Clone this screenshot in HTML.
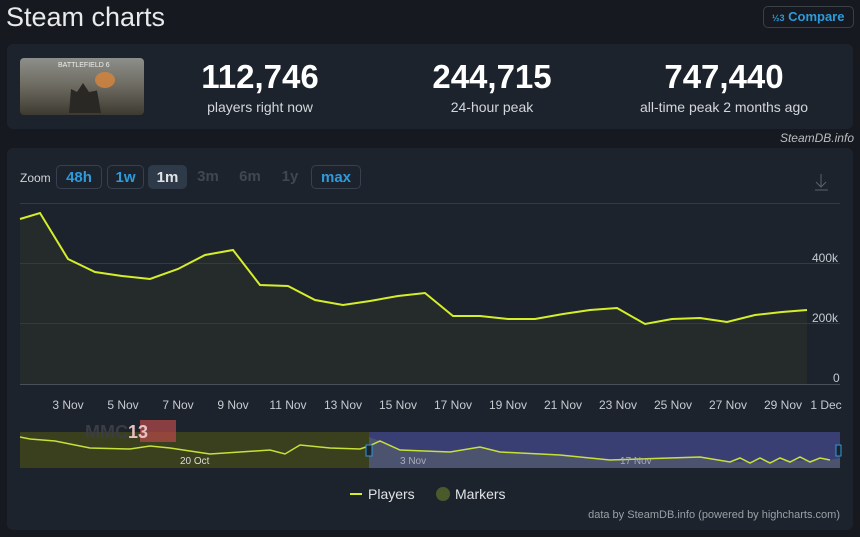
<!DOCTYPE html><html><head><style>
body{margin:0;width:860px;height:537px;background:#16191f;font-family:"Liberation Sans",sans-serif;position:relative;overflow:hidden;color:#e6e8eb}
.a{position:absolute}
.p{background:#1d232c;border-radius:6px}
.n{font-size:33px;font-weight:bold;color:#fff;text-align:center;width:240px}
.l{font-size:14px;color:#d3d7dc;text-align:center;width:240px}
.b{position:absolute;top:165px;height:24px;border:1px solid #35414f;border-radius:5px;font-size:15px;font-weight:bold;color:#2d9bdb;line-height:24px;text-align:center;box-sizing:border-box}
.x{font-size:12px;color:#c6cbd1;position:absolute;top:398px;width:50px;text-align:center}
</style></head><body>
<div class="a" style="left:6px;top:2px;font-size:27px;color:#e8eaec">Steam charts</div>
<div class="a" style="left:763px;top:6px;width:91px;height:22px;border:1px solid #3a4048;border-radius:5px;box-sizing:border-box;color:#2d9bdb;font-size:13px;font-weight:bold;line-height:20px;padding-left:8px"><span style="font-size:9px">½3</span> Compare</div>
<div class="a p" style="left:7px;top:44px;width:846px;height:85px"></div>
<div class="a" style="left:20px;top:58px;width:124px;height:57px;border-radius:4px;background:linear-gradient(180deg,#8d8f8a 0%,#6c6a60 50%,#3d3a32 100%)"><div style="position:absolute;left:38px;top:4px;font-size:7px;color:#eee">BATTLEFIELD 6</div><div style="position:absolute;left:75px;top:14px;width:20px;height:16px;border-radius:50%;background:#d9843a;opacity:.8"></div><div style="position:absolute;left:45px;top:25px;width:40px;height:30px;background:#2a2824;clip-path:polygon(10% 100%,15% 20%,30% 30%,45% 0,60% 30%,80% 25%,90% 100%)"></div></div>
<div class="a n" style="left:140px;top:58px">112,746</div><div class="a l" style="left:140px;top:99px">players right now</div>
<div class="a n" style="left:372px;top:58px">244,715</div><div class="a l" style="left:372px;top:99px">24-hour peak</div>
<div class="a n" style="left:604px;top:58px">747,440</div><div class="a l" style="left:604px;top:99px">all-time peak 2 months ago</div>
<div class="a" style="right:6px;top:131px;font-size:12px;font-style:italic;color:#b9bec4">SteamDB.info</div>
<div class="a p" style="left:7px;top:148px;width:846px;height:382px"></div>
<div class="a" style="left:20px;top:171px;font-size:12px;color:#d0d4d8">Zoom</div>
<div class="b" style="left:56px;width:46px">48h</div>
<div class="b" style="left:107px;width:37px">1w</div>
<div class="b" style="left:148px;width:39px;background:#2f3a48;border-color:#2f3a48;color:#dfe3e7">1m</div>
<div class="b" style="left:190px;width:36px;border:none;color:#3e4752">3m</div>
<div class="b" style="left:231px;width:38px;border:none;color:#3e4752">6m</div>
<div class="b" style="left:274px;width:32px;border:none;color:#3e4752">1y</div>
<div class="b" style="left:311px;width:50px">max</div>
<svg class="a" style="left:0;top:0" width="860" height="537">
<polygon fill="#252b2b" points="20,219 40,213 68,259 95,272 122,276 150,279 178,269 205,255 233,250 260,285 288,286 315,300 343,305 370,301 398,296 425,293 453,316 480,316 508,319 535,319 563,314 590,310 617,308 645,324 672,319 700,318 727,322 755,315 782,312 807,310 807,384 20,384"/>
<g stroke="#323a45" stroke-width="1"><line x1="20" y1="203.5" x2="840" y2="203.5"/><line x1="20" y1="263.5" x2="840" y2="263.5"/><line x1="20" y1="323.5" x2="840" y2="323.5"/><line x1="20" y1="384.5" x2="840" y2="384.5" stroke="#48505a"/></g>
<g stroke="#5a626c" stroke-width="1" fill="none"><path d="M821 174v12M816 182l5 5 5-5M815 190h13"/></g>
<polyline fill="none" stroke="#d5ee2a" stroke-width="2" points="20,219 40,213 68,259 95,272 122,276 150,279 178,269 205,255 233,250 260,285 288,286 315,300 343,305 370,301 398,296 425,293 453,316 480,316 508,319 535,319 563,314 590,310 617,308 645,324 672,319 700,318 727,322 755,315 782,312 807,310"/>
<rect x="20" y="432" width="349" height="36" fill="#3a3f1d"/>
<rect x="369" y="432" width="471" height="36" fill="#3a3f73"/>
<polygon fill="#58606a" opacity=".6" points="369,437 380,441 400,450 450,452 480,447 500,452 560,455 610,460 700,457 730,462 830,460 840,458 840,468 369,468"/>
<polyline fill="none" stroke="#c8e03a" stroke-width="1.5" points="20,437 30,439 55,441 90,448 130,449 150,446 170,448 210,454 240,452 270,450 285,454 300,445 330,448 360,449 369,446 380,441 400,450 450,452 480,447 500,452 560,455 610,460 700,457 730,462 740,458 750,463 760,458 770,463 780,458 790,462 800,457 810,462 820,458 830,460"/>
<rect x="366" y="445" width="6" height="11" fill="#1d232c" stroke="#2d9bdb"/>
<rect x="836" y="445" width="5" height="11" fill="#1d232c" stroke="#2d9bdb"/>
<line x1="350" y1="494" x2="362" y2="494" stroke="#d5ee2a" stroke-width="2"/>
<circle cx="443" cy="494" r="7" fill="#4b5a2a"/>
<rect x="140" y="420" width="36" height="22" fill="#b84a4a" opacity=".7"/>
</svg>
<div class="a" style="left:812px;top:251px;font-size:12px;color:#c6cbd1">400k</div>
<div class="a" style="left:812px;top:311px;font-size:12px;color:#c6cbd1">200k</div>
<div class="a" style="left:833px;top:371px;font-size:12px;color:#c6cbd1">0</div>
<div class="x" style="left:43px">3 Nov</div><div class="x" style="left:98px">5 Nov</div><div class="x" style="left:153px">7 Nov</div><div class="x" style="left:208px">9 Nov</div><div class="x" style="left:263px">11 Nov</div><div class="x" style="left:318px">13 Nov</div><div class="x" style="left:373px">15 Nov</div><div class="x" style="left:428px">17 Nov</div><div class="x" style="left:483px">19 Nov</div><div class="x" style="left:538px">21 Nov</div><div class="x" style="left:593px">23 Nov</div><div class="x" style="left:648px">25 Nov</div><div class="x" style="left:703px">27 Nov</div><div class="x" style="left:758px">29 Nov</div><div class="x" style="left:801px">1 Dec</div>
<div class="a" style="left:85px;top:422px;font-size:18px;font-weight:bold;color:#3a3e44">MMC<span style="color:#e8c0c0">13</span></div>
<div class="a" style="left:180px;top:456px;font-size:10px;color:#ddd">20 Oct</div>
<div class="a" style="left:400px;top:456px;font-size:10px;color:#aab">3 Nov</div>
<div class="a" style="left:620px;top:456px;font-size:10px;color:#aab">17 Nov</div>
<div class="a" style="left:368px;top:486px;font-size:14px;color:#dfe3e7">Players</div>
<div class="a" style="left:455px;top:486px;font-size:14px;color:#dfe3e7">Markers</div>
<div class="a" style="right:20px;top:509px;font-size:11px;color:#9aa0a7">data by SteamDB.info (powered by highcharts.com)</div>
</body></html>
